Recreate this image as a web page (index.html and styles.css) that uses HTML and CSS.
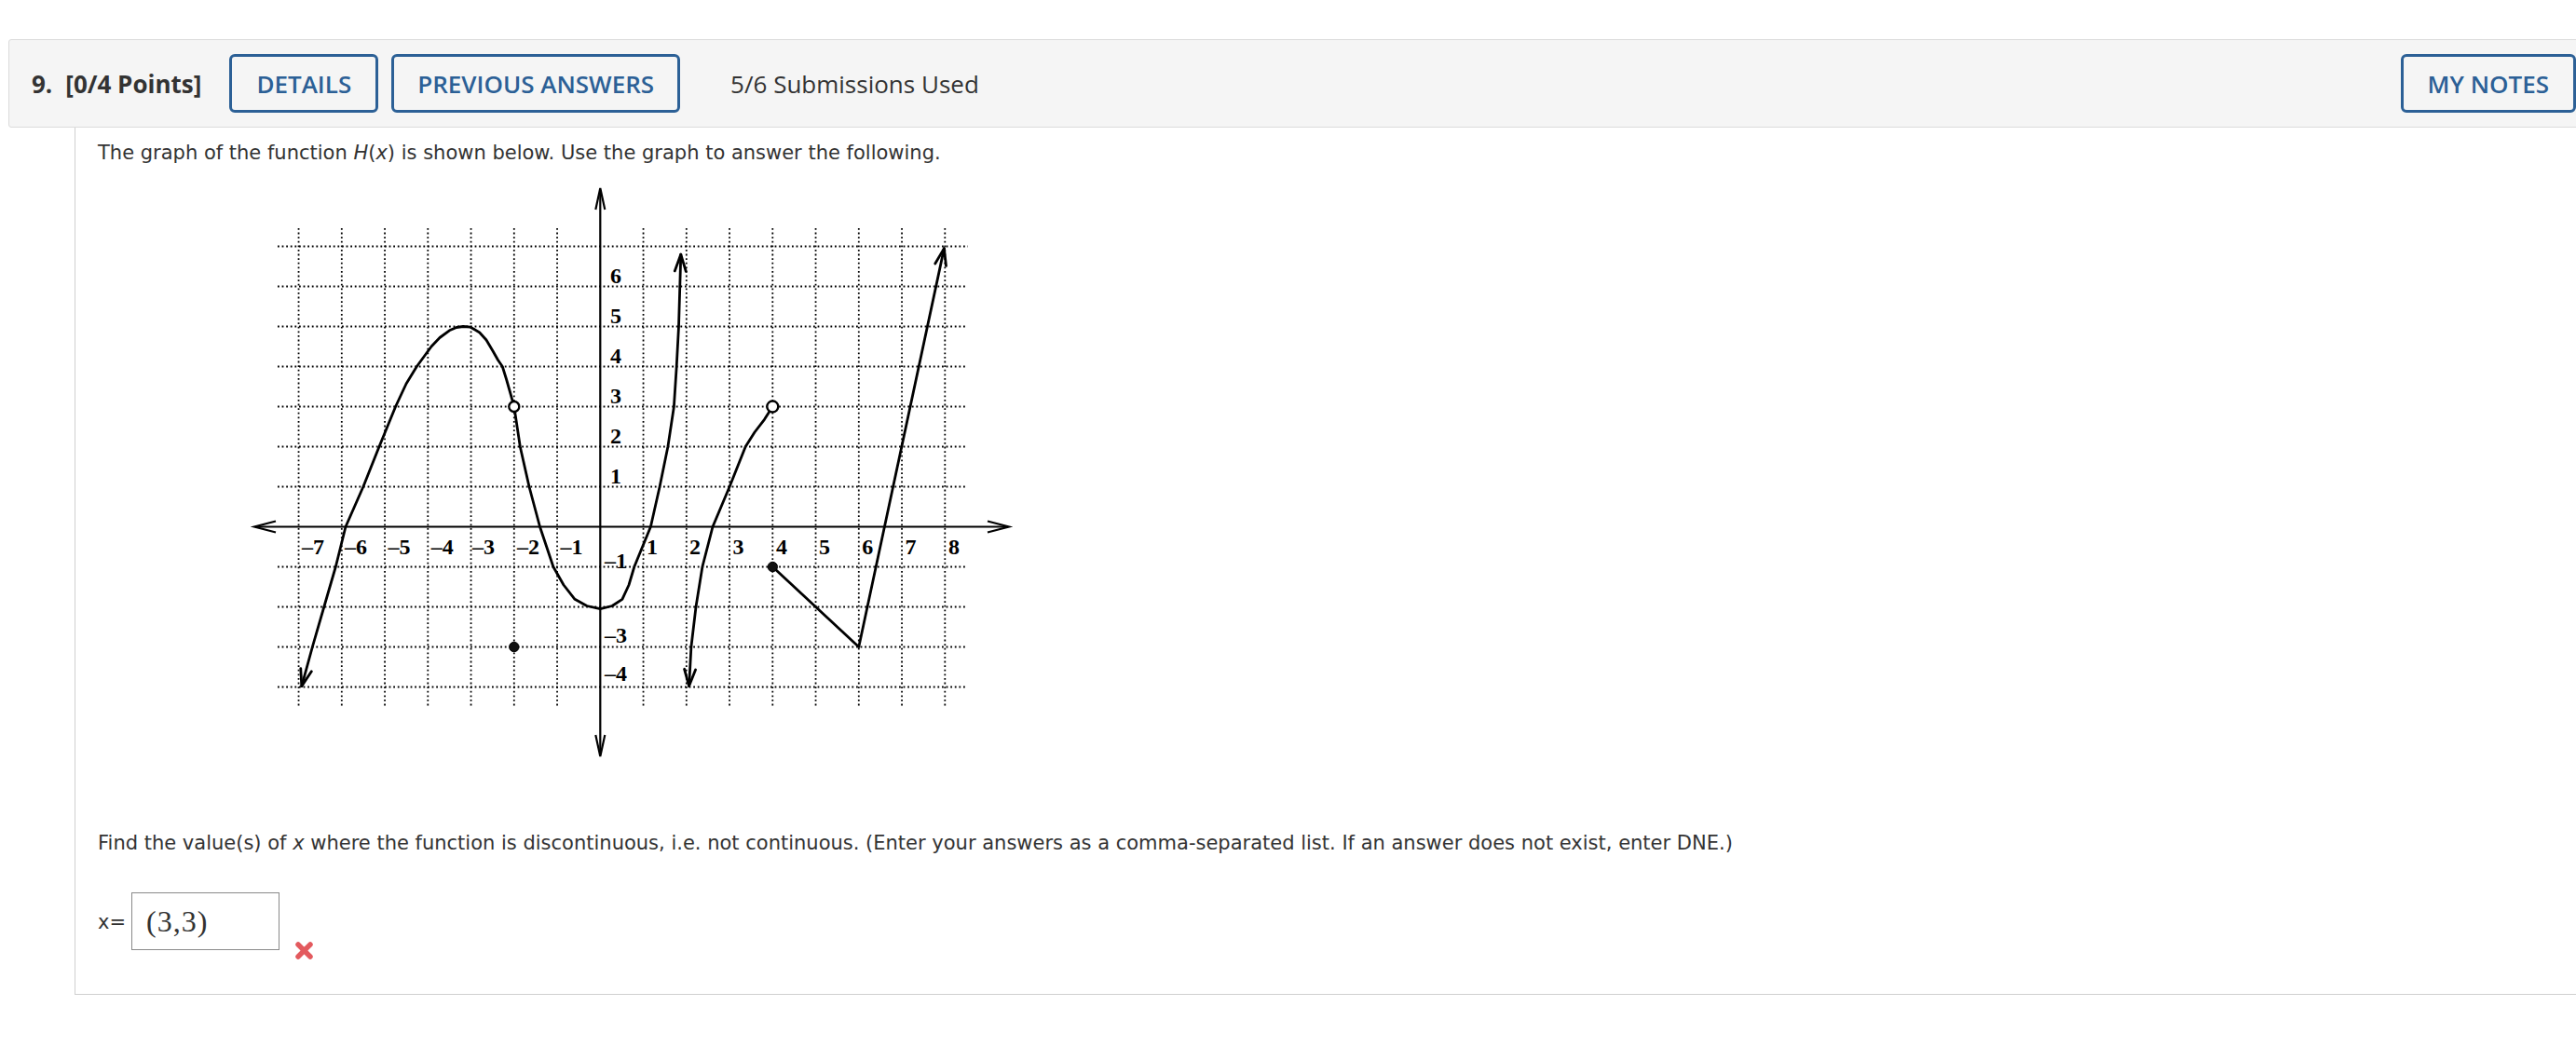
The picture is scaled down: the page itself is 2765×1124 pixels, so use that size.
FILE: index.html
```html
<!DOCTYPE html>
<html lang="en">
<head>
<meta charset="utf-8">
<title>Question 9</title>
<link rel="stylesheet" href="styles.css">
</head>
<body>
<div class="page">
  <div class="qhead">
    <span class="qnum">9.</span>
    <span class="qpts">[0/4 Points]</span>
    <button class="btn btn-details">DETAILS</button>
    <button class="btn btn-prev">PREVIOUS ANSWERS</button>
    <span class="subs">5/6 Submissions Used</span>
    <button class="btn btn-notes">MY NOTES</button>
  </div>
  <div class="qbody">
    <p class="prompt">The graph of the function <i>H</i>(<i>x</i>) is shown below. Use the graph to answer the following.</p>
    <svg class="graph" width="840" height="640" viewBox="0 0 840 640" xmlns="http://www.w3.org/2000/svg">
      <path class="grid" d="M60.55 55V568M106.8 55V568M153.05 55V568M199.3 55V568M245.55 55V568M291.8 55V568M338.05 55V568M430.55 55V568M476.8 55V568M523.05 55V568M569.3 55V568M615.55 55V568M661.8 55V568M708.05 55V568M754.3 55V568"/>
      <path class="grid" d="M38 74.5H779M38 117.5H777M38 160.5H777M38 203.5H777M38 246.5H777M38 289.5H777M38 332.5H777M38 418.5H777M38 461.5H777M38 504.5H777M38 547.5H777"/>
      <path class="axis" d="M15 375.5H821M384.3 14V620"/>
      <path class="axis" d="M36 369.5L13 375.5L36 381.5M800 369.5L823 375.5L800 381.5M379.3 35L384.3 12L389.3 35M379.3 599L384.3 622L389.3 599"/>
      <g class="ticks">
        <text x="64" y="405">–7</text>
        <text x="110" y="405">–6</text>
        <text x="156.5" y="405">–5</text>
        <text x="202.8" y="405">–4</text>
        <text x="247" y="405">–3</text>
        <text x="295" y="405">–2</text>
        <text x="341.5" y="405">–1</text>
        <text x="434" y="405">1</text>
        <text x="480" y="405">2</text>
        <text x="526.5" y="405">3</text>
        <text x="573" y="405">4</text>
        <text x="619" y="405">5</text>
        <text x="665.3" y="405">6</text>
        <text x="711.5" y="405">7</text>
        <text x="758" y="405">8</text>
        <text x="395" y="114">6</text>
        <text x="395" y="157">5</text>
        <text x="395" y="200">4</text>
        <text x="395" y="243">3</text>
        <text x="395" y="286">2</text>
        <text x="395" y="329">1</text>
        <text x="389" y="420">–1</text>
        <text x="389" y="500">–3</text>
        <text x="389" y="541">–4</text>
      </g>
      <polyline class="curve" points="63.8,546.6 75.35,504.5 87.8,461.5 100.3,418.5 111,375.5 129.9,332.5 147,289.5 164.6,246.5 176,222 187.3,203.5 203,182 212,172.5 222.4,164.8 230,161.5 237.2,160.5 245,161.2 254.8,167 262,175 268.7,186.3 274.5,196.5 279.3,203.5 283.5,217 287.5,231 291.8,246.5"/>
      <polyline class="curve" points="291.8,246.5 298.3,289.5 308,332.5 319.5,375.5 333.9,418.5 345,438 357,453.3 370,460.5 384.3,463.7 397,460.5 407.9,453.3 415,438 420.8,418.5 438.4,375.5 448.1,332.5 456.9,289.5 463.4,246.5 466.2,203.5 468.5,160.5 470.8,83.1"/>
      <polyline class="curve" points="479.6,546.6 481.9,504.5 487,461.5 493.9,418.5 505,375.5 523.1,332.5 540.2,289.5 550,274 560.5,260.3 569.3,246.5"/>
      <polyline class="curve" points="569.3,418.5 661.8,504.5 753.4,76.6"/>
      <path class="curve" d="M74.35 530.83L63.8 546.6L62.77 527.65M476.27 101.27L470.8 83.1L464.27 100.91M486.57 528.96L479.6 546.6L474.59 528.3M755.5 95.46L753.4 76.6L743.76 92.94"/>
      <circle class="open" cx="291.8" cy="246.5" r="5.5"/>
      <circle class="open" cx="569.3" cy="246.5" r="6"/>
      <circle class="dot" cx="291.8" cy="504.5" r="5.2"/>
      <circle class="dot" cx="569.3" cy="418.5" r="5.2"/>
    </svg>
    <p class="prompt ask">Find the value(s) of <i>x</i> where the function is discontinuous, i.e. not continuous. (Enter your answers as a comma-separated list. If an answer does not exist, enter DNE.)</p>
    <div class="answer">
      <span class="alabel">x=</span>
      <div class="abox"><span class="math">(3,3)</span></div>
      <svg class="wrong" width="21" height="21" viewBox="0 0 21 21" xmlns="http://www.w3.org/2000/svg">
        <path class="xmark" d="M4 4L17 17M17 4L4 17"/>
      </svg>
    </div>
  </div>
</div>
</body>
</html>
```

FILE: styles.css
```css
html, body {
  margin: 0;
  padding: 0;
  overflow: hidden;
  background: #fff;
}

.page {
  width: 2790px;
  box-sizing: border-box;
  padding: 42px 0 0 9px;
}

.qhead {
  display: flex;
  align-items: center;
  height: 95px;
  box-sizing: border-box;
  border: 1px solid #dcdcdc;
  border-radius: 3px;
  background: #f5f5f5;
  padding: 0 24px;
  font-family: "Open Sans", "Liberation Sans", sans-serif;
  font-size: 26px;
  color: #333;
}

.qnum {
  font-weight: 700;
}

.qpts {
  font-weight: 700;
  margin-left: 14px;
}

.btn {
  font-family: "Open Sans", "Liberation Sans", sans-serif;
  font-size: 26px;
  font-weight: 600;
  color: #2c6096;
  background: transparent;
  border: 3px solid #2c6096;
  border-radius: 6px;
  height: 63px;
  padding: 0 26px;
  line-height: 1;
  cursor: pointer;
}

.btn-details {
  margin-left: 30px;
}

.btn-prev {
  margin-left: 14px;
  padding: 0 25px;
}

.subs {
  margin-left: 54px;
  font-weight: 400;
}

.btn-notes {
  margin-left: auto;
}

.qbody {
  margin-left: 71px;
  border-left: 1px solid #cfcfcf;
  border-bottom: 1px solid #cfcfcf;
  padding: 11px 0 36px 24px;
  font-family: "DejaVu Sans", Verdana, sans-serif;
  font-size: 21px;
  color: #333;
}

.prompt {
  margin: 0;
  line-height: 32px;
}

.graph {
  display: block;
  margin: 10px 0 0 155px;
}

.grid {
  fill: none;
  stroke: #000;
  stroke-width: 1.8;
  stroke-dasharray: 1.8 2.8;
}

.axis {
  fill: none;
  stroke: #000;
  stroke-width: 2.2;
}

.ticks {
  font-family: "Liberation Serif", "Times New Roman", serif;
  font-weight: 700;
  font-size: 24px;
  fill: #000;
}

.curve {
  fill: none;
  stroke: #000;
  stroke-width: 2.8;
  stroke-linejoin: round;
  stroke-linecap: round;
}

.open {
  fill: #fff;
  stroke: #000;
  stroke-width: 2.4;
}

.dot {
  fill: #111;
  stroke: #000;
  stroke-width: 1;
}

.ask {
  margin-top: 59px;
}

.answer {
  display: flex;
  align-items: flex-start;
  margin-top: 37px;
}

.alabel {
  line-height: 62px;
  padding-top: 1px;
}

.abox {
  margin-left: 6px;
  width: 159px;
  height: 62px;
  box-sizing: border-box;
  border: 1px solid #8a8a8a;
  display: flex;
  align-items: center;
  padding-left: 15px;
}

.math {
  font-family: "Liberation Serif", "Times New Roman", serif;
  font-size: 32px;
  letter-spacing: 1px;
  color: #333;
}

.wrong {
  display: block;
  margin: 52px 0 0 16px;
}

.xmark {
  fill: none;
  stroke: #e35a5e;
  stroke-width: 5.5;
  stroke-linecap: round;
}
```
